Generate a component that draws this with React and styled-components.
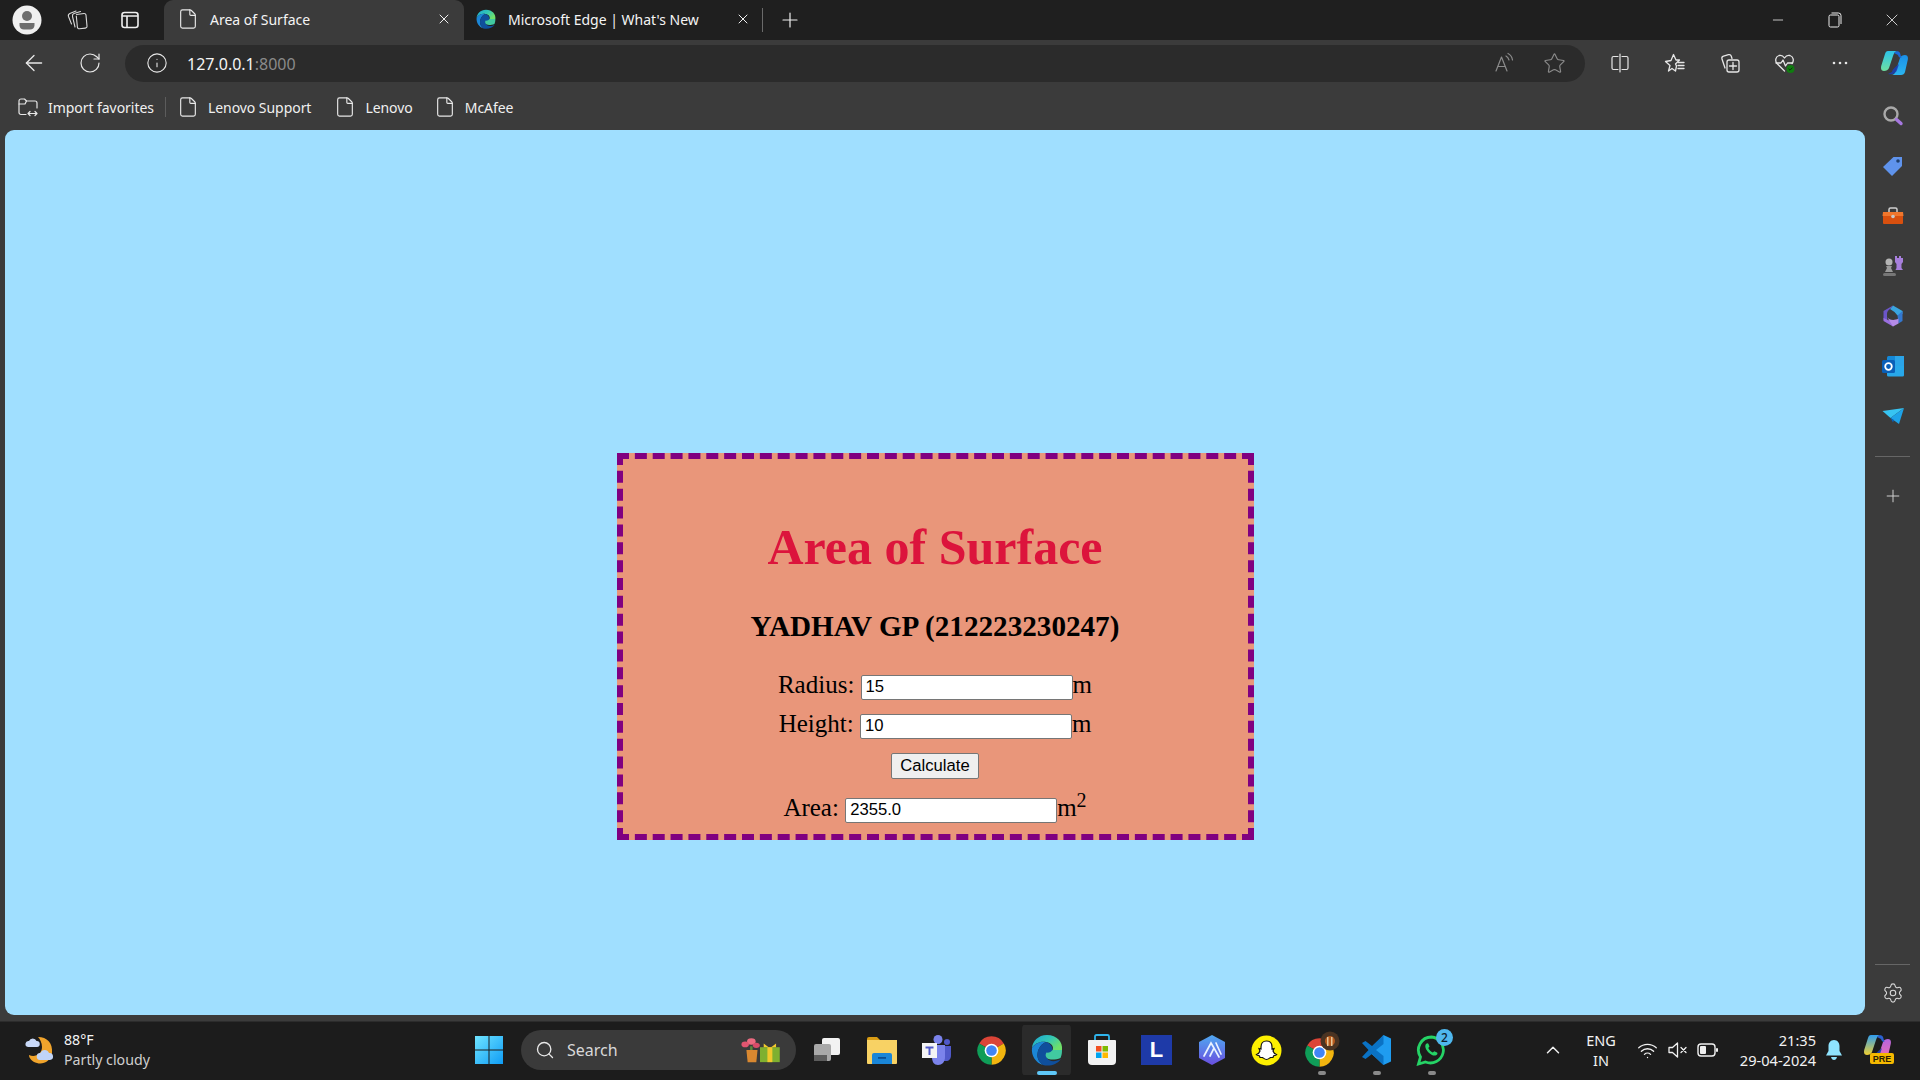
import React from "react";
import styled, { createGlobalStyle } from "styled-components";
import { ArrowLeft, RotateCw, Info, File, X, Plus, Star, Search, Settings, ChevronUp, Wifi, Minus } from "lucide-react";

const GlobalStyle = createGlobalStyle`
  html, body { margin: 0; padding: 0; background: #3b3b3b; }
  * { box-sizing: border-box; }
`;

const UI_FONT = `"Noto Sans", "Open Sans", sans-serif`;

const Screen = styled.div`
  width: 1920px;
  height: 1080px;
  display: flex;
  flex-direction: column;
  overflow: hidden;
  background: #3b3b3b;
  color: #fff;
  font-family: ${UI_FONT};
`;

const TabStrip = styled.div`
  height: 40px;
  display: flex;
  align-items: stretch;
  background: #1f1f1f;
`;

const Slot = styled.div`
  flex: none;
  width: ${(p) => p.$w || 55}px;
  height: ${(p) => (p.$h ? `${p.$h}px` : "auto")};
  display: flex;
  align-items: center;
  justify-content: center;
`;

const Tab = styled.div`
  flex: none;
  width: ${(p) => p.$w}px;
  display: flex;
  align-items: center;
  padding: 0 ${(p) => p.$pr}px 2px ${(p) => p.$pl}px;
  gap: ${(p) => p.$gap}px;
  font-size: 14px;
  color: #f4f4f4;
  background: ${(p) => (p.$active ? "#3b3b3b" : "transparent")};
  border-radius: 9px 9px 0 0;
`;

const TabTitle = styled.span`
  flex: 1;
  white-space: nowrap;
`;

const TabDivider = styled.div`
  flex: none;
  width: 1px;
  height: 24px;
  margin: 8px 15px 0 6px;
  background: #6a6a6a;
`;

const Spring = styled.div`
  flex: 1;
`;

const Toolbar = styled.div`
  height: 46px;
  flex: none;
  display: flex;
  align-items: center;
  padding-left: 6px;
`;

const AddressBar = styled.div`
  flex: none;
  width: 1460px;
  height: 37px;
  margin: 0 7px;
  display: flex;
  align-items: center;
  padding: 0 0 0 21px;
  border-radius: 19px;
  background: #2b2b2b;
`;

const Url = styled.div`
  flex: 1;
  margin-left: 19px;
  padding-top: 1px;
  font-size: 16px;
  color: #f5f5f5;
  span { color: #8a8a8a; }
`;

const Body = styled.div`
  flex: 1;
  min-height: 0;
  display: flex;
`;

const LeftColumn = styled.div`
  flex: none;
  width: 1865px;
  display: flex;
  flex-direction: column;
`;

const Bookmarks = styled.div`
  height: 44px;
  flex: none;
  display: flex;
  align-items: center;
  padding: 0 0 2px 17px;
  font-size: 14px;
  letter-spacing: -0.05px;
  color: #f0f0f0;
`;

const Bookmark = styled.div`
  display: flex;
  align-items: center;
  gap: ${(p) => p.$gap || 9}px;
  margin-right: ${(p) => p.$mr || 20}px;
  white-space: nowrap;
`;

const BookmarkDivider = styled.div`
  width: 1px;
  height: 20px;
  margin-right: 11px;
  background: #5c5c5c;
`;

const Viewport = styled.main`
  flex: 1;
  margin: 0 0 6px 5px;
  padding-top: 323px;
  border-radius: 9px;
  background: #a0dfff;
  color: #000;
`;

const Card = styled.section`
  width: 637px;
  height: 387px;
  margin: 0 auto;
  padding-top: 60px;
  border: 6px dashed #800080;
  background: #e9967a;
  text-align: center;
  font-family: "Liberation Serif", "Times New Roman", serif;
`;

const Title = styled.h1`
  margin: 0;
  font-size: 50px;
  line-height: 56px;
  font-weight: 700;
  color: #dc143c;
`;

const Author = styled.h2`
  margin: 34px 0 0;
  font-size: 29.17px;
  line-height: 34px;
  font-weight: 700;
`;

const Form = styled.form`
  margin-top: 27px;
`;

const Row = styled.div`
  height: ${(p) => p.$h || 39}px;
  font-size: 25px;
  line-height: 29px;
  white-space: nowrap;
  sup { font-size: 20px; line-height: 0; }
`;

const Field = styled.input`
  width: 212px;
  height: 25px;
  margin: 0;
  padding: 0 3px 0 4px;
  border: 1px solid #767676;
  border-radius: 2px;
  background: #fff;
  font-family: "Liberation Sans", Arial, sans-serif;
  font-size: 16.67px;
  color: #000;
  vertical-align: 1px;
`;

const Submit = styled.button`
  width: 88px;
  height: 26px;
  padding: 0;
  border: 1px solid #767676;
  border-radius: 2px;
  background: #efefef;
  font-family: "Liberation Sans", Arial, sans-serif;
  font-size: 16.67px;
  line-height: 22px;
  color: #000;
`;

const Sidebar = styled.aside`
  flex: 1;
  display: flex;
  flex-direction: column;
  align-items: center;
  padding: 5px 0 0 0;
`;

const SideRule = styled.div`
  width: 35px;
  height: 1px;
  margin: ${(p) => p.$m || "15px 0 29px"};
  background: #666;
`;

const Taskbar = styled.footer`
  height: 59px;
  flex: none;
  display: flex;
  align-items: center;
  padding-bottom: 2px;
  background: #1c1c1c;
  border-top: 1px solid #2c2c2c;
`;

const Weather = styled.div`
  flex: none;
  width: 461px;
  padding-left: 24px;
  display: flex;
  align-items: center;
  gap: 6px;
`;

const WeatherText = styled.div`
  font-size: 14.2px;
  line-height: 20px;
  color: #f4f4f4;
  small { display: block; font-size: 14.2px; color: #cfcfcf; }
`;

const SearchPill = styled.div`
  flex: none;
  width: 275px;
  height: 40px;
  margin-left: 4px;
  padding: 0 15px 0 14px;
  display: flex;
  align-items: center;
  gap: 12px;
  border-radius: 20px;
  background: #3a3a3a;
  font-size: 16px;
  color: #d8d8d8;
`;

const Apps = styled.div`
  flex: none;
  display: flex;
  margin-left: 3px;
`;

const AppSlot = styled.div`
  position: relative;
  flex: none;
  width: 55px;
  height: 50px;
  padding: 0 3px;
  display: flex;
  align-items: center;
  justify-content: center;
  border-radius: 5px;
  background: ${(p) => (p.$active ? "#2b2b2b" : "transparent")};
  background-clip: content-box;
`;

const RunDot = styled.i`
  position: absolute;
  bottom: 0;
  left: 50%;
  width: ${(p) => (p.$active ? 20 : 8)}px;
  height: 4px;
  margin-left: ${(p) => (p.$active ? -10 : -4)}px;
  border-radius: 2px;
  background: ${(p) => (p.$active ? "#5fc8f8" : "#8a8a8a")};
`;

const Badge = styled.b`
  position: absolute;
  top: 4px;
  right: 6px;
  width: 17px;
  height: 17px;
  border-radius: 50%;
  background: #4fb8ee;
  color: #10212c;
  font-size: 12px;
  font-weight: 500;
  line-height: 17px;
  text-align: center;
`;

const Tray = styled.div`
  flex: none;
  margin-left: 66px;
  display: flex;
  align-items: center;
`;

const Lang = styled.div`
  flex: none;
  width: 40px;
  font-size: 14.5px;
  line-height: 20px;
  text-align: center;
  color: #f2f2f2;
`;

const Clock = styled.div`
  flex: none;
  width: 92px;
  font-size: 14.6px;
  line-height: 20px;
  text-align: right;
  white-space: nowrap;
  color: #f2f2f2;
`;

const strokeIcon = { fill: "none", stroke: "currentColor", strokeLinecap: "round", strokeLinejoin: "round" };

const Avatar = () => (
  <svg width="30" height="30" viewBox="0 0 30 30">
    <circle cx="15" cy="15" r="14.5" fill="#f0f0f0" />
    <circle cx="15" cy="11" r="5" fill="#6e6e6e" />
    <path d="M7.5 18h15v2.5a4.5 4.5 0 0 1-4.5 4h-6a4.5 4.5 0 0 1-4.5-4z" fill="#6e6e6e" />
  </svg>
);

const CollectionsTab = () => (
  <svg width="24" height="24" viewBox="0 0 24 24" {...strokeIcon} stroke="#d8d8d8" strokeWidth="1.1">
    <path d="M11.500 6.500 19 5.500a1.800 1.800 0 0 1 2 1.600l1 11a1.800 1.800 0 0 1-1.600 2l-6 .6a1.800 1.800 0 0 1-2-1.600L11.300 8" />
    <path d="M10 19 7.500 8.500C7.200 7 8 6 9 5.600L15.500 3.500" />
    <path d="M6.500 16 3.500 8.500C3 7 3.700 6 4.800 5.500L11 3" />
  </svg>
);

const TabPanel = () => (
  <svg width="20" height="20" viewBox="0 0 20 20" {...strokeIcon} stroke="#efefef" strokeWidth="1.6">
    <rect x="2" y="2.5" width="16" height="15" rx="2.5" />
    <path d="M2.5 6h15M7 6v11" />
  </svg>
);

const EdgeLogo = ({ size = 20 }) => (
  <svg width={size} height={size} viewBox="0 0 32 32">
    <defs>
      <linearGradient id="edgeTop" x1="0" y1="0" x2="1" y2="0.6">
        <stop offset="0" stopColor="#1aa5d8" />
        <stop offset="0.55" stopColor="#33c6b4" />
        <stop offset="1" stopColor="#6fe06a" />
      </linearGradient>
    </defs>
    <path d="M16 1C7 1 1.500 7.500 1 14c3-5 9-7 14-6 6 1 8 5 6.500 8H31c1-8-5-15-15-15z" fill="url(#edgeTop)" />
    <path d="M1 14c-1 8 4 15 11 17-4-3-6-7-5.500-11C7 14 11 9.500 15 8 9 7 4 9.500 1 14z" fill="#1b86d6" />
    <path d="M15 8c-4 1.500-8 6-8.500 12-.5 4 1.500 8 5.500 11 6 1.500 14 0 18-6-5 3-12 3-14-1-1-2.500 0-4.500 2-5 1.500 1.500 3.500 1.500 3.500-3C21.500 12 19 9 15 8z" fill="#0f4f9c" />
    <path d="M21.500 16c-1.200 2-4 3-6 2.500-1.500 2-1 4.500 1 6 3 2 9 1 13-.5 1.200-2.500 1.500-5 1.500-8z" fill="#41c9a0" />
  </svg>
);

const ReadAloud = () => (
  <svg width="22" height="22" viewBox="0 0 22 22" {...strokeIcon} stroke="#8b8b8b" strokeWidth="1.2">
    <path d="M3 19 8.500 5 14 19M5 14.500h7" />
    <path d="M13 4c1.500.8 2.500 2.200 3 4M15 1.500c2.500 1.200 4 3.500 4.500 6.500" />
  </svg>
);

const SplitScreen = () => (
  <svg width="22" height="22" viewBox="0 0 22 22" {...strokeIcon} stroke="#e6e6e6" strokeWidth="1.2">
    <path d="M9 4.500H4.500A1.500 1.500 0 0 0 3 6v10a1.500 1.500 0 0 0 1.500 1.500H9M13 4.500h4.500A1.500 1.500 0 0 1 19 6v10a1.500 1.500 0 0 1-1.500 1.500H13M11 2v18" />
  </svg>
);

const FavoritesList = () => (
  <svg width="22" height="22" viewBox="0 0 22 22" {...strokeIcon} stroke="#e6e6e6" strokeWidth="1.3">
    <path d="M9.500 2.500 12 8h3.500l-4 4 1 2-1 5-3.500-2.500L4.500 19 6 13.500 1.500 9.500 7 8.500z" />
    <path d="M14 10.500h6M14 13.500h6M14 16.500h6" />
  </svg>
);

const CollectionsPlus = () => (
  <svg width="22" height="22" viewBox="0 0 22 22" {...strokeIcon} stroke="#e6e6e6" strokeWidth="1.3">
    <path d="M6 16 3 7c-.4-1.300.3-2.400 1.500-2.800l5-1.500c1.300-.4 2.400.3 2.800 1.500l.7 2.300" />
    <rect x="8" y="8" width="12" height="12" rx="2" />
    <path d="M14 10.500v7M10.500 14h7" />
  </svg>
);

const Health = () => (
  <svg width="22" height="22" viewBox="0 0 22 22">
    <path d="M10.500 19 3 11.500C.8 9 1.500 4.500 5 3.500c2.500-.6 4.300.6 5.500 2.500 1.200-1.900 3-3.100 5.500-2.500 3.500 1 4.200 5.500 2 8" {...strokeIcon} stroke="#e6e6e6" strokeWidth="1.300" />
    <path d="M2 11h5l2-3 2.500 6 2-3h5" {...strokeIcon} stroke="#e6e6e6" strokeWidth="1.300" />
    <circle cx="16.500" cy="17" r="4" fill="#107c10" />
    <path d="m14.800 17 1.200 1.200 2.200-2.300" {...strokeIcon} stroke="#0d2d0d" strokeWidth="1" />
  </svg>
);

const Dots = () => (
  <svg width="20" height="20" viewBox="0 0 20 20" fill="#e6e6e6">
    <circle cx="4" cy="10" r="1.300" />
    <circle cx="10" cy="10" r="1.300" />
    <circle cx="16" cy="10" r="1.300" />
  </svg>
);

const CopilotMark = ({ size = 30, pre }) => (
  <svg width={size} height={size} viewBox="0 0 30 30">
    <defs>
      <linearGradient id={pre ? "cpA2" : "cpA"} x1="0" y1="0" x2="0" y2="1">
        <stop offset="0" stopColor={pre ? "#2f9ef0" : "#2cc3ea"} />
        <stop offset="1" stopColor={pre ? "#f0d030" : "#6fe0a0"} />
      </linearGradient>
      <linearGradient id={pre ? "cpB2" : "cpB"} x1="0" y1="0" x2="0" y2="1">
        <stop offset="0" stopColor={pre ? "#b565e0" : "#1a8fe8"} />
        <stop offset="1" stopColor={pre ? "#f070b0" : "#2bb5f0"} />
      </linearGradient>
    </defs>
    <path d="M8 3h10c-3 0-4 2-5 5l-4 12c-.6 2-3 3-5 3-3 0-3.500-3-2.500-6L5 6c.5-2 1.500-3 3-3z" fill={`url(#${pre ? "cpA2" : "cpA"})`} />
    <path d="M21 27H11c3 0 4-2 5-5l4-12c.6-2 3-3 5-3 3 0 3.500 3 2.500 6L25 24c-.5 2-2 3-4 3z" fill={`url(#${pre ? "cpB2" : "cpB"})`} />
    <path d="M14 5c2-2.500 5-2 6 0 .6 1.500 1 4 1.500 5-2 0-3-1-3.500-3z" fill={pre ? "#2a5fd0" : "#1a6ad8"} />
    <path d="M8 26c5 1 8-1 9-4l2-6c-2 2-6 4-7 8z" fill="#1c3fb0" opacity="0.9" />
  </svg>
);

const SideSearch = () => (
  <svg width="24" height="24" viewBox="0 0 24 24">
    <circle cx="10" cy="10" r="6.500" fill="none" stroke="#a8a8a8" strokeWidth="2.400" />
    <path d="m15.500 15.500 4.500 4" stroke="#a678e0" strokeWidth="3.400" strokeLinecap="round" />
  </svg>
);

const SideTag = () => (
  <svg width="24" height="24" viewBox="0 0 24 24">
    <path d="M12.500 3H21v9l-10 10-9-9z" fill="#5f93ec" />
    <circle cx="17" cy="7" r="1.800" fill="#20406e" />
  </svg>
);

const SideToolbox = () => (
  <svg width="24" height="24" viewBox="0 0 24 24">
    <path d="M8 8V5.500C8 4.500 8.500 4 9.500 4h5c1 0 1.500.5 1.500 1.500V8" fill="none" stroke="#cfcfcf" strokeWidth="1.500" />
    <path d="M2 8h20l.500 4H1.500z" fill="#f0762c" />
    <path d="M2 12h20v7a1 1 0 0 1-1 1H3a1 1 0 0 1-1-1z" fill="#d8500f" />
    <circle cx="12" cy="12.500" r="1.800" fill="#c9c9c9" />
  </svg>
);

const SideChess = () => (
  <svg width="24" height="24" viewBox="0 0 24 24">
    <path d="M14 2h2v2h2V2h2v2h2V2h0v6l-1.500 2v4l1.500 2H14.500l1-2v-4L14 8z" fill="#a77fdc" />
    <circle cx="8" cy="8" r="3.500" fill="#b4b4b4" />
    <path d="M5 12h6l-1 2 2 4H4l2-4z" fill="#9a9a9a" />
    <rect x="2" y="19" width="13" height="3" rx="1.500" fill="#777" />
  </svg>
);

const SideM365 = () => (
  <svg width="24" height="24" viewBox="0 0 24 24">
    <path d="M12 1.500 21.500 7v3l-5 1.500-3-3.500L9 5z" fill="#39a5e0" />
    <path d="M21.500 7v10l-4 2.500-1-8z" fill="#3478d0" />
    <path d="M2.500 7 12 1.500 9 5c-2 1-3 3-3 5v7l-3.500-1.500z" fill="#6b55c8" />
    <path d="M6 15.500 14 19l-2 3.500L2.500 17v-3z" fill="#9a6fe0" />
    <path d="M6 13c2 3 7 4 11.500 1.500v5L12 22.500z" fill="#b58ce8" />
  </svg>
);

const SideOutlook = () => (
  <svg width="24" height="24" viewBox="0 0 24 24">
    <rect x="6" y="2" width="17" height="20" rx="1.500" fill="#1488d8" />
    <rect x="14" y="2" width="9" height="10" fill="#2ba4e8" />
    <path d="M6 12h17v9a1.500 1.500 0 0 1-1.500 1.500H7.500A1.500 1.500 0 0 1 6 21z" fill="#28a8ea" />
    <rect x="1" y="6" width="13" height="13" rx="1.500" fill="#0a5fb8" />
    <circle cx="7.500" cy="12.500" r="3.300" fill="none" stroke="#fff" strokeWidth="1.800" />
  </svg>
);

const SideSend = () => (
  <svg width="24" height="24" viewBox="0 0 24 24">
    <path d="M1.500 7 23 4 9.500 14z" fill="#37c4f2" />
    <path d="M23 4 18 20l-8.500-6z" fill="#1ea3e8" />
    <path d="m9.500 14 2.500 4.500 1-2.500z" fill="#0a5fb8" />
  </svg>
);

const ImportFav = () => (
  <svg width="22" height="22" viewBox="0 0 22 22" {...strokeIcon} stroke="#e8e8e8" strokeWidth="1.200">
    <path d="M9 18.500H4a2 2 0 0 1-2-2V5a2 2 0 0 1 2-2h3.500l2 2H18a2 2 0 0 1 2 2v5" />
    <path d="M2 8h6l1.500-3" />
    <path d="M11 17.500h9M13 15.500l-2 2 2 2M18 15.500l2 2-2 2" />
  </svg>
);

const WeatherIcon = () => (
  <svg width="34" height="34" viewBox="0 0 34 34">
    <path d="M14 4c9 0 15 6 14 16-1 8-9 12-15 10C8 29 5 25 5 22c6 3 13-1 13-8 0-4-2-8-4-10z" fill="#f0a42c" />
    <path d="M4 14a3 3 0 0 1 1-6 4 4 0 0 1 7.500 0 3 3 0 0 1 .5 6z" fill="#c8d8f8" />
    <path d="M16 27a3.500 3.500 0 0 1 .5-7 4.500 4.500 0 0 1 8.500 0 3.500 3.500 0 0 1 1 7z" fill="#c0d4f8" />
  </svg>
);

const WinLogo = () => (
  <svg width="30" height="30" viewBox="0 0 30 30">
    <defs>
      <linearGradient id="winGrad" x1="0" y1="0" x2="1" y2="1">
        <stop offset="0" stopColor="#6fe4ff" />
        <stop offset="1" stopColor="#0f9cf5" />
      </linearGradient>
    </defs>
    <path d="M1 1h13.500v13.500H1zM15.500 1H29v13.500H15.500zM1 15.500h13.500V29H1zM15.500 15.500H29V29H15.500z" fill="url(#winGrad)" />
  </svg>
);

const GiftPromo = () => (
  <svg width="42" height="28" viewBox="0 0 34 30" preserveAspectRatio="none">
    <circle cx="10" cy="6" r="3.500" fill="#ec6a80" />
    <circle cx="5" cy="9" r="3" fill="#e25570" />
    <circle cx="14" cy="10" r="2.800" fill="#d84c68" />
    <path d="M9 11h2v6H9z" fill="#5c8a3a" />
    <path d="M6 15h9l-1 13H7z" fill="#d98830" />
    <rect x="17" y="12" width="16" height="16" fill="#7fb030" />
    <rect x="23" y="12" width="4" height="16" fill="#f2c92c" />
    <path d="M20 8l4 4h2l4-4v4H20z" fill="#f2c92c" />
  </svg>
);

const TaskView = () => (
  <svg width="32" height="32" viewBox="0 0 32 32">
    <rect x="11" y="4" width="18" height="17" rx="2" fill="#f2f2f2" />
    <rect x="3" y="10" width="17" height="17" rx="2" fill="#a8a8a8" />
    <rect x="3" y="21" width="13" height="6" fill="#5c5c5c" />
  </svg>
);

const Explorer = () => (
  <svg width="32" height="32" viewBox="0 0 32 32">
    <path d="M1 5a2 2 0 0 1 2-2h8l3 3H1z" fill="#d99c14" />
    <path d="M1 6h30v23a1 1 0 0 1-1 1H2a1 1 0 0 1-1-1z" fill="#f8d264" />
    <path d="M6 21a2 2 0 0 1 2-2h16a2 2 0 0 1 2 2v9H6z" fill="#1a86d8" />
    <rect x="12" y="23" width="8" height="1.800" fill="#0a4f94" />
  </svg>
);

const Teams = () => (
  <svg width="32" height="32" viewBox="0 0 32 32">
    <circle cx="17" cy="5.500" r="4.500" fill="#7b83eb" />
    <circle cx="26" cy="8" r="3" fill="#5059c9" />
    <path d="M21 12h9v9c0 4-2 6-5 6h-4z" fill="#5059c9" />
    <path d="M11 11h13v12c0 5-3 8-7 8s-6-3-6-8z" fill="#7b83eb" />
    <rect x="1" y="9" width="15" height="15" fill="#f4f4f4" />
    <path d="M4.500 12.500h8v2h-3V21H7.500v-6.500h-3z" fill="#5059c9" />
  </svg>
);

const Chrome = () => (
  <svg width="31" height="31" viewBox="0 0 24 24">
    <path d="M12 12 2.470 6.500A11 11 0 0 1 21.530 6.500Z" fill="#db4437" />
    <path d="M12 12 21.530 6.500A11 11 0 0 1 12 23Z" fill="#f2b50f" />
    <path d="M12 12 12 23A11 11 0 0 1 2.470 6.500Z" fill="#0f9d58" />
    <circle cx="12" cy="12" r="5.300" fill="#fff" />
    <circle cx="12" cy="12" r="4.100" fill="#4285f4" />
  </svg>
);

const ChromeProfile = () => (
  <svg width="38" height="38" viewBox="0 0 38 38">
    <g transform="translate(1 6) scale(1.290)">
      <path d="M12 12 2.470 6.500A11 11 0 0 1 21.530 6.500Z" fill="#db4437" />
      <path d="M12 12 21.530 6.500A11 11 0 0 1 12 23Z" fill="#f2b50f" />
      <path d="M12 12 12 23A11 11 0 0 1 2.470 6.500Z" fill="#0f9d58" />
      <circle cx="12" cy="12" r="5.300" fill="#fff" />
      <circle cx="12" cy="12" r="4.100" fill="#4285f4" />
    </g>
    <circle cx="27" cy="10" r="9.500" fill="#4a3322" />
    <circle cx="27" cy="10" r="5" fill="#b85a1c" />
    <path d="M24 6h1.500v9H24zM28 6h1.500v9H28z" fill="#e8c89a" />
  </svg>
);

const Store = () => (
  <svg width="32" height="34" viewBox="0 0 32 34">
    <path d="M9 7V3.500C9 2.500 9.500 2 10.500 2h11c1 0 1.500.5 1.500 1.500V7" fill="none" stroke="#2fb4ec" strokeWidth="1.800" />
    <path d="M3 7h26a1 1 0 0 1 1 1v20a4 4 0 0 1-4 4H6a4 4 0 0 1-4-4V8a1 1 0 0 1 1-1z" fill="#f2f2f2" />
    <rect x="10" y="13" width="5.500" height="5.500" fill="#f25022" />
    <rect x="16.500" y="13" width="5.500" height="5.500" fill="#7fba00" />
    <rect x="10" y="19.500" width="5.500" height="5.500" fill="#00a4ef" />
    <rect x="16.500" y="19.500" width="5.500" height="5.500" fill="#ffb900" />
  </svg>
);

const LenovoL = styled.div`
  width: 31px;
  height: 30px;
  background: #1e3aa8;
  color: #fff;
  font-family: "Liberation Sans", Arial, sans-serif;
  font-size: 22px;
  font-weight: 700;
  line-height: 30px;
  text-align: center;
`;

const Arc = () => (
  <svg width="28" height="32" viewBox="0 0 28 32">
    <defs>
      <linearGradient id="arcGrad" x1="0" y1="0" x2="0" y2="1">
        <stop offset="0" stopColor="#4fa8f0" />
        <stop offset="1" stopColor="#6a4fe0" />
      </linearGradient>
    </defs>
    <path d="M14 1 27 8v16l-13 7-13-7V8z" fill="url(#arcGrad)" />
    <path d="M6 22 13 9l3 5M12 22l4-8 5 9M18 9l5 11" fill="none" stroke="#eaf2ff" strokeWidth="1.700" strokeLinecap="round" />
  </svg>
);

const Snapchat = () => (
  <svg width="31" height="31" viewBox="0 0 31 31">
    <circle cx="15.500" cy="15.500" r="15" fill="#fdf000" />
    <path d="M15.500 6c3.500 0 5.500 2.500 5.500 6v2l2-.5-1 2.500c.5 1.500 2 3 3.500 3.500-1 1-2.500 1-3 1.500l-.5 1.500-2.500 0c-1.500 1-2.500 2-4 2s-2.500-1-4-2l-2.500 0-.5-1.500c-.5-.5-2-.5-3-1.500 1.500-.5 3-2 3.500-3.500l-1-2.500 2 .5v-2c0-3.500 2-6 5.500-6z" fill="#fff" stroke="#111" strokeWidth="1.200" />
  </svg>
);

const VsCode = () => (
  <svg width="31" height="32" viewBox="0 0 31 32">
    <path d="M22.500 1 30 4.500v23L22.500 31 8 17.500z" fill="#1f9cf0" />
    <path d="M22.500 1 11 12 4.500 7 1 9l6.500 7L1 23l3.500 2L11 20l11.500 11V22L15 16l7.500-6z" fill="#0a72c4" />
  </svg>
);

const WhatsApp = () => (
  <svg width="31" height="32" viewBox="0 0 31 32">
    <path d="M15.500 3A13 13 0 0 0 4.500 23L2.500 30l7-2A13 13 0 1 0 15.500 3z" fill="none" stroke="#25d366" strokeWidth="2.800" />
    <path d="M10 10c1-1 2-1 2.500 0l1 2.500-1.200 1.500c1 2 2.500 3.500 4.500 4.500l1.500-1.300 2.700 1.200c.8.500.5 1.800-.5 2.500-2 1.500-5 .5-8-2.500s-4-6.500-2.500-8.400z" fill="#25d366" />
  </svg>
);

const Speaker = () => (
  <svg width="22" height="22" viewBox="0 0 22 22" {...strokeIcon} stroke="#efefef" strokeWidth="1.300">
    <path d="M3 8.500v5h3.500l5 4.500V4l-5 4.500z" />
    <path d="m15 8.500 5 5M20 8.500l-5 5" />
  </svg>
);

const Battery = () => (
  <svg width="22" height="14" viewBox="0 0 22 14">
    <rect x="1" y="1" width="17" height="12" rx="3" fill="none" stroke="#f0f0f0" strokeWidth="1.400" />
    <rect x="3" y="3" width="6" height="8" rx="1" fill="#f0f0f0" />
    <rect x="19" y="5" width="2" height="4" rx="1" fill="#f0f0f0" />
  </svg>
);

const Bell = () => (
  <svg width="20" height="22" viewBox="0 0 20 22">
    <path d="M10 1c-3.500 0-5.500 3-5.500 6v5L2 16.500h16L15.500 12V7c0-3-2-6-5.500-6z" fill="#8fe4ff" />
    <path d="M7 18h6c-.5 2-1.500 3-3 3s-2.500-1-3-3z" fill="#8fe4ff" />
  </svg>
);

const CopilotPre = () => (
  <svg width="32" height="32" viewBox="0 0 32 32">
    <g transform="translate(0 -2)">
      <CopilotMark size={30} pre />
    </g>
    <rect x="7" y="19" width="24" height="11" rx="2" fill="#f5b800" />
    <text x="19" y="28" textAnchor="middle" fontFamily="Liberation Sans, sans-serif" fontWeight="700" fontSize="9" fill="#2a1f00">PRE</text>
  </svg>
);

const doc = <File size={22} strokeWidth={1.25} color="#e8e8e8" />;

const App = () => {
  return (
    <Screen>
      <GlobalStyle />
      <TabStrip>
        <Slot $w={54}><Avatar /></Slot>
        <Slot $w={46}><CollectionsTab /></Slot>
        <Slot $w={60}><TabPanel /></Slot>
        <Slot $w={4} />
        <Tab $active $w={300} $pl={13} $pr={12} $gap={11}>
          {doc}
          <TabTitle>Area of Surface</TabTitle>
          <X size={16} strokeWidth={1.5} color="#f0f0f0" />
        </Tab>
        <Tab $w={292} $pl={12} $pr={5} $gap={12}>
          <EdgeLogo />
          <TabTitle>Microsoft Edge | What's New</TabTitle>
          <X size={16} strokeWidth={1.5} color="#f0f0f0" />
        </Tab>
        <TabDivider />
        <Plus size={24} strokeWidth={1.2} color="#f0f0f0" style={{ alignSelf: "center" }} />
        <Spring />
        <Slot $w={57}><Minus size={16} strokeWidth={1.2} color="#eee" /></Slot>
        <Slot $w={57}>
          <svg width="14" height="16" viewBox="0 0 14 16" fill="none" stroke="#eee" strokeWidth="1">
            <rect x="1" y="3" width="10" height="12" rx="1.500" />
            <path d="M3.500 1h7A2.500 2.500 0 0 1 13 3.500V12" />
          </svg>
        </Slot>
        <Slot $w={57}><X size={20} strokeWidth={1} color="#eee" /></Slot>
      </TabStrip>

      <Toolbar>
        <Slot $w={56}><ArrowLeft size={26} strokeWidth={1.2} color="#e8e8e8" /></Slot>
        <Slot $w={56}><RotateCw size={24} strokeWidth={1.2} color="#e8e8e8" /></Slot>
        <AddressBar>
          <Info size={22} strokeWidth={1.2} color="#e8e8e8" />
          <Url>127.0.0.1<span>:8000</span></Url>
          <Slot $w={50}><ReadAloud /></Slot>
          <Slot $w={50}><Star size={23} strokeWidth={1.2} color="#8b8b8b" /></Slot>
          <Slot $w={6} />
        </AddressBar>
        <Slot><SplitScreen /></Slot>
        <Slot><FavoritesList /></Slot>
        <Slot><CollectionsPlus /></Slot>
        <Slot><Health /></Slot>
        <Slot><Dots /></Slot>
        <Slot><CopilotMark /></Slot>
      </Toolbar>

      <Body>
        <LeftColumn>
          <Bookmarks>
            <Bookmark $gap={9} $mr={11}><ImportFav />Import favorites</Bookmark>
            <BookmarkDivider />
            <Bookmark $mr={23}>{doc}Lenovo Support</Bookmark>
            <Bookmark $mr={21}>{doc}Lenovo</Bookmark>
            <Bookmark>{doc}McAfee</Bookmark>
          </Bookmarks>
          <Viewport>
            <Card>
              <Title>Area of Surface</Title>
              <Author>YADHAV GP (212223230247)</Author>
              <Form onSubmit={(e) => e.preventDefault()}>
                <Row>Radius: <Field defaultValue="15" />m</Row>
                <Row>Height: <Field defaultValue="10" />m</Row>
                <Row $h={45}><Submit type="button">Calculate</Submit></Row>
                <Row>Area: <Field defaultValue="2355.0" />m<sup>2</sup></Row>
              </Form>
            </Card>
          </Viewport>
        </LeftColumn>
        <Sidebar>
          <Slot $h={50}><SideSearch /></Slot>
          <Slot $h={50}><SideTag /></Slot>
          <Slot $h={50}><SideToolbox /></Slot>
          <Slot $h={50}><SideChess /></Slot>
          <Slot $h={50}><SideM365 /></Slot>
          <Slot $h={50}><SideOutlook /></Slot>
          <Slot $h={50}><SideSend /></Slot>
          <SideRule />
          <Plus size={20} strokeWidth={1.2} color="#cfcfcf" />
          <Spring />
          <SideRule $m="0 0 15px" />
          <Slot $h={26}><Settings size={22} strokeWidth={1.2} color="#d8d8d8" /></Slot>
          <Slot $h={15} />
        </Sidebar>
      </Body>

      <Taskbar>
        <Weather>
          <WeatherIcon />
          <WeatherText>88°F<small>Partly cloudy</small></WeatherText>
        </Weather>
        <Slot $w={56}><WinLogo /></Slot>
        <SearchPill>
          <Search size={20} strokeWidth={1.6} color="#e8e8e8" />
          <Spring>Search</Spring>
          <GiftPromo />
        </SearchPill>
        <Apps>
          <AppSlot><TaskView /></AppSlot>
          <AppSlot><Explorer /></AppSlot>
          <AppSlot><Teams /></AppSlot>
          <AppSlot><Chrome /></AppSlot>
          <AppSlot $active><EdgeLogo size={32} /><RunDot $active /></AppSlot>
          <AppSlot><Store /></AppSlot>
          <AppSlot><LenovoL>L</LenovoL></AppSlot>
          <AppSlot><Arc /></AppSlot>
          <AppSlot><Snapchat /></AppSlot>
          <AppSlot><ChromeProfile /><RunDot /></AppSlot>
          <AppSlot><VsCode /><RunDot /></AppSlot>
          <AppSlot><WhatsApp /><Badge>2</Badge><RunDot /></AppSlot>
        </Apps>
        <Tray>
          <Slot $w={56}><ChevronUp size={22} strokeWidth={1.6} color="#f0f0f0" /></Slot>
          <Lang>ENG<br />IN</Lang>
          <Slot $w={11} />
          <Slot $w={30}><Wifi size={21} strokeWidth={1.5} color="#f0f0f0" /></Slot>
          <Slot $w={30}><Speaker /></Slot>
          <Slot $w={32}><Battery /></Slot>
          <Clock>21:35<br />29-04-2024</Clock>
          <Slot $w={36}><Bell /></Slot>
          <Slot $w={54}><CopilotPre /></Slot>
        </Tray>
      </Taskbar>
    </Screen>
  );
};

export default App;
